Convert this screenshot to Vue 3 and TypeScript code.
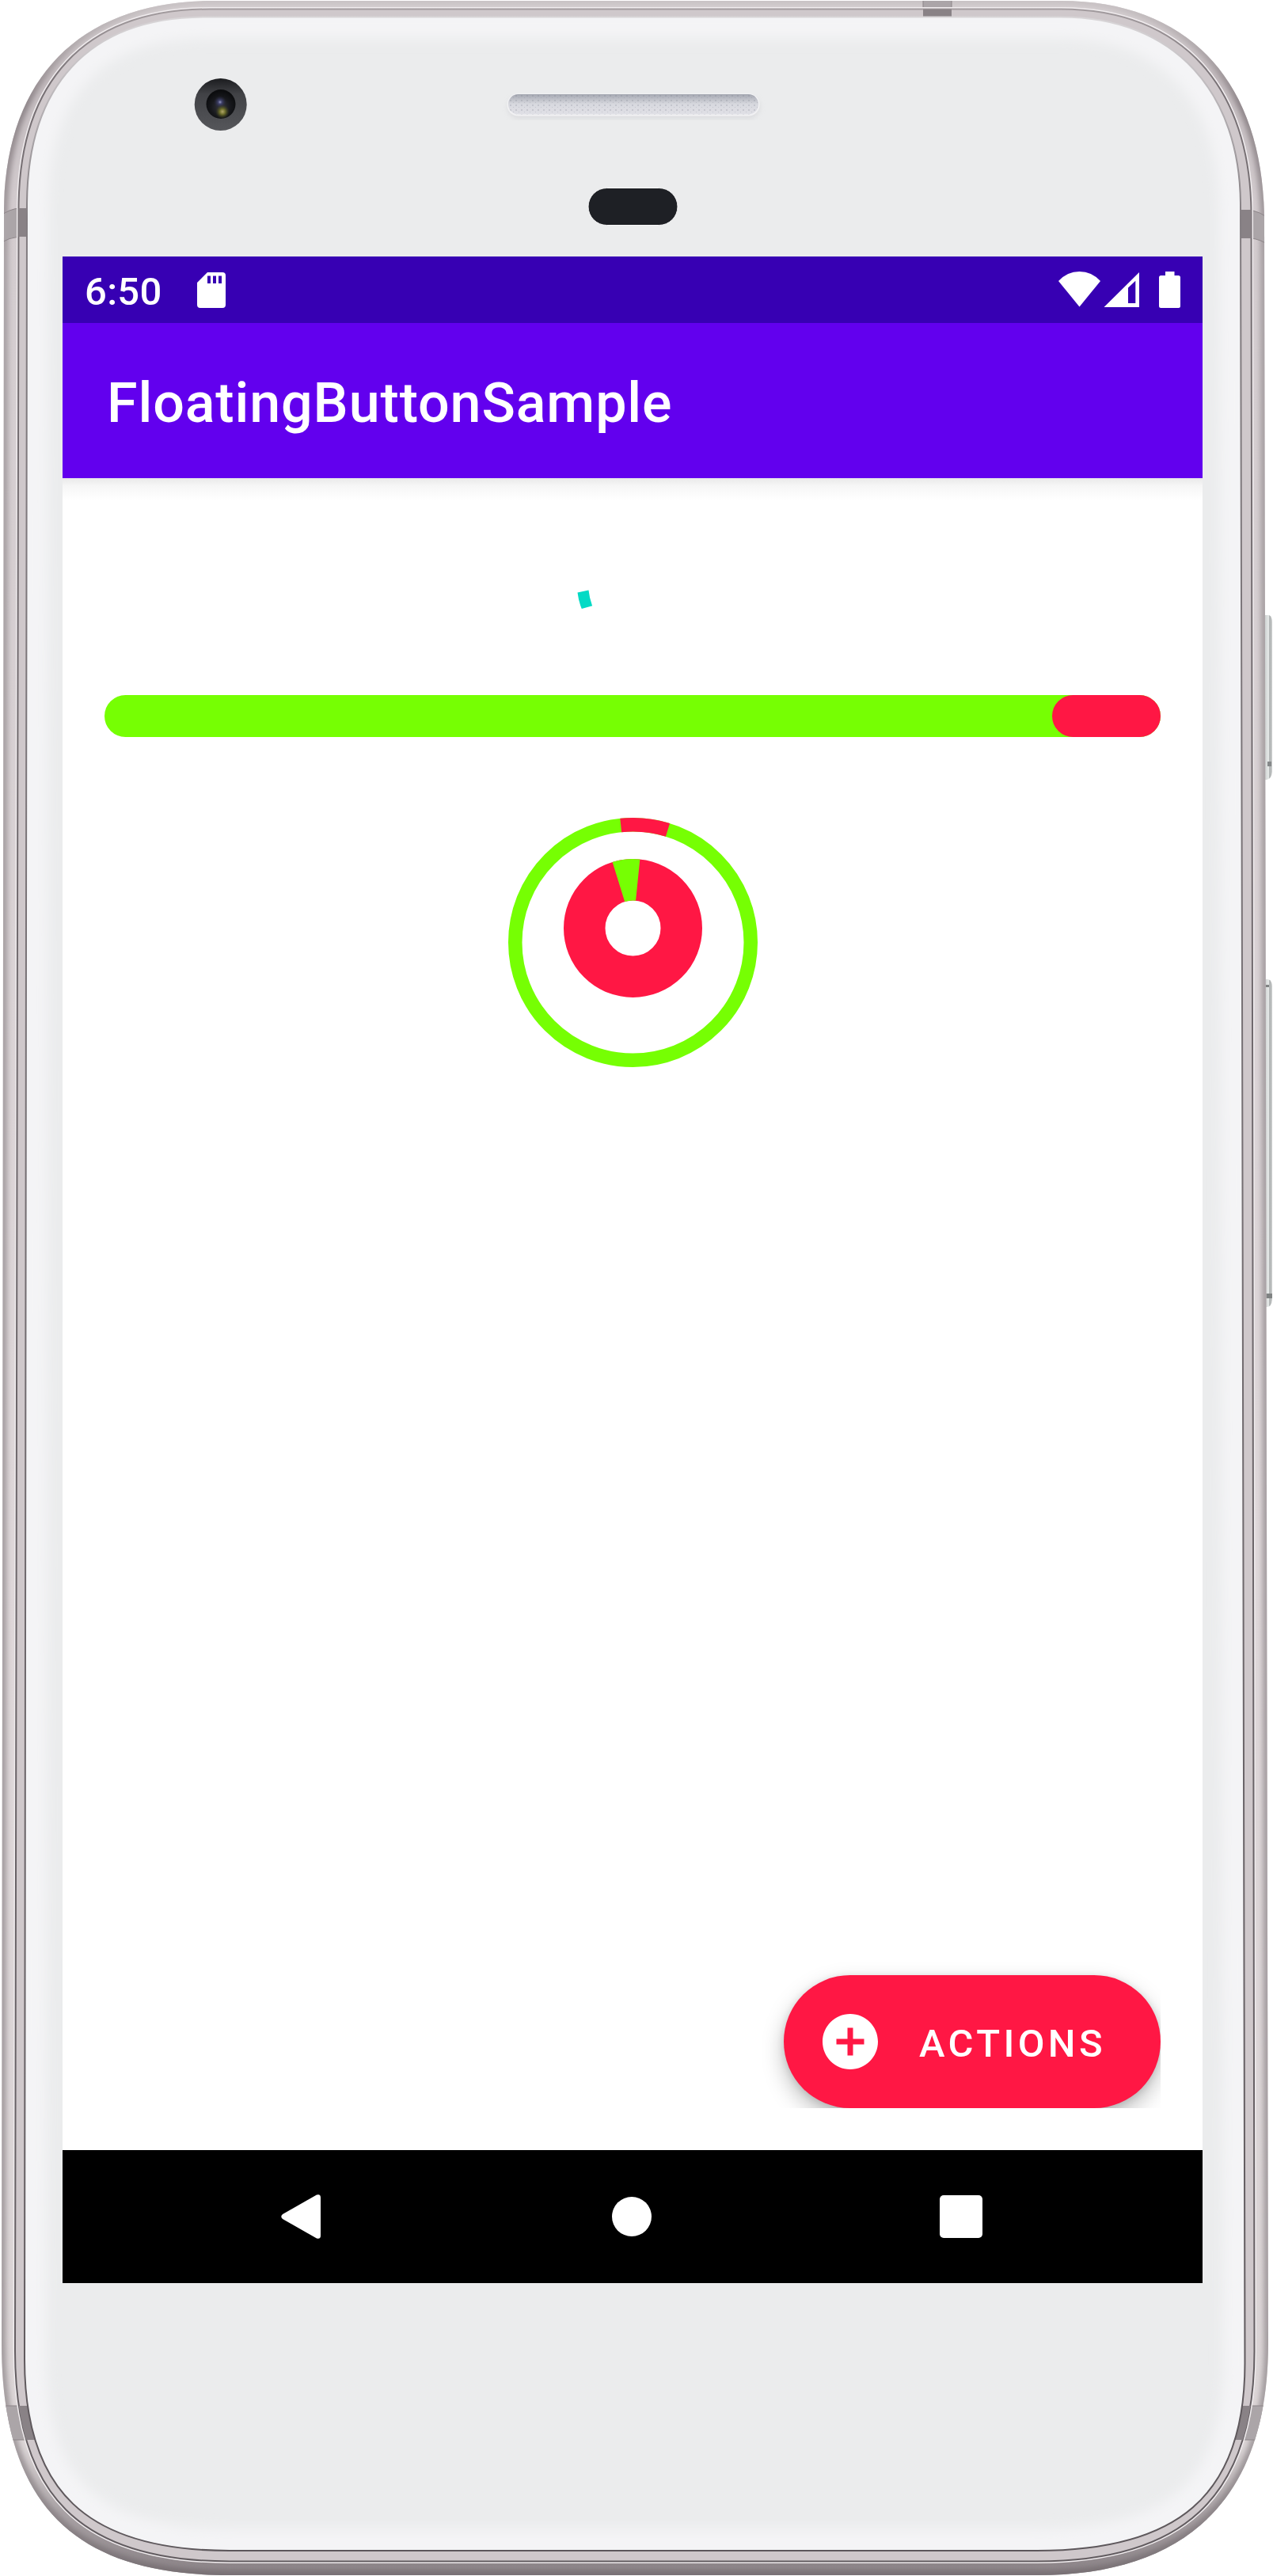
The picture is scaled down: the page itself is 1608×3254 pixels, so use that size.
<script setup lang="ts">
interface Arc {
  cx: number
  cy: number
  r: number
  from: number
  to: number
}

const title = 'FloatingButtonSample'
const clock = '6:50'
const actionLabel = 'ACTIONS'

const arcPath = ({ cx, cy, r, from, to }: Arc): string => {
  const point = (deg: number): string => {
    const a = ((deg - 90) * Math.PI) / 180
    return `${(cx + r * Math.cos(a)).toFixed(2)} ${(cy + r * Math.sin(a)).toFixed(2)}`
  }
  return `M${point(from)}A${r} ${r} 0 0 1 ${point(to)}`
}

const outerArc = arcPath({ cx: 158.5, cy: 158.5, r: 148.75, from: -5.9, to: 17.2 })
const innerArc = arcPath({ cx: 158.5, cy: 140.5, r: 61.25, from: -17.2, to: 5.8 })

const body =
  'M270 1H1340C1503 1 1597 105 1597 280L1602 2960C1602 3160 1495 3253 1310 3253H290C95 3253 2 3165 2 2960L5 270C5 100 100 1 270 1Z'
const bezel =
  'M265 11.5H1340C1495 11.5 1580 112 1580.5 270L1584.5 2970C1584.5 3158 1490 3235.5 1310 3235.5H290C100 3235.5 19 3150 19 2970L23.5 265C23.5 105 105 11.5 265 11.5Z'
const glass =
  'M260 21.5H1340C1485 21.5 1567 118 1567 260L1572.5 2985C1572.5 3155 1485 3222 1310 3222H290C108 3222 31 3145 31 2980L34 260C34 110 110 21.5 260 21.5Z'
const bands =
  'M1166 0H1202V30H1166ZM0 273Q12 264 24 263H40V299H24Q12 300 0 307ZM1560 265H1580Q1592 268 1603 276V310Q1592 302 1580 301H1560ZM0 3039H50V3082H0ZM1556 3039H1608V3082H1556Z'
</script>

<template>
  <div class="phone">
    <svg class="frame" viewBox="0 0 1608 3254" width="1608" height="3254" aria-hidden="true">
      <defs>
        <linearGradient id="metal" x1="0" y1="0" x2="0" y2="1">
          <stop offset="0" stop-color="#d9d3d5" />
          <stop offset="0.03" stop-color="#c2babd" />
          <stop offset="0.08" stop-color="#d3cccf" />
          <stop offset="0.6" stop-color="#dfd8da" />
          <stop offset="0.95" stop-color="#dbd5d6" />
          <stop offset="0.975" stop-color="#aaa3a6" />
          <stop offset="1" stop-color="#898185" />
        </linearGradient>
        <linearGradient id="edge" x1="0" y1="0" x2="0" y2="1">
          <stop offset="0" stop-color="#c9c3c5" />
          <stop offset="0.04" stop-color="#8f868a" />
          <stop offset="0.1" stop-color="#a8a1a4" />
          <stop offset="0.95" stop-color="#a39c9f" />
          <stop offset="1" stop-color="#787074" />
        </linearGradient>
        <linearGradient id="line" x1="0" y1="0" x2="0" y2="1">
          <stop offset="0" stop-color="#a39c9f" />
          <stop offset="0.03" stop-color="#777074" />
          <stop offset="1" stop-color="#625c60" />
        </linearGradient>
        <linearGradient id="glassLine" x1="0" y1="0" x2="0" y2="1">
          <stop offset="0" stop-color="#d8d5d7" />
          <stop offset="0.03" stop-color="#bcb8bb" />
          <stop offset="0.08" stop-color="#827c80" />
          <stop offset="1" stop-color="#5d575b" />
        </linearGradient>
        <linearGradient id="key" x1="0" y1="0" x2="1" y2="0">
          <stop offset="0" stop-color="#a0a3a4" />
          <stop offset="0.3" stop-color="#ced2d1" />
          <stop offset="0.65" stop-color="#e6e9e8" />
          <stop offset="0.75" stop-color="#aaaeae" />
          <stop offset="1" stop-color="#cdcfcf" />
        </linearGradient>
        <linearGradient id="mesh" x1="0" y1="0" x2="0" y2="1">
          <stop offset="0" stop-color="#a4a7b1" />
          <stop offset="0.25" stop-color="#bfc1c9" />
          <stop offset="0.5" stop-color="#d8d9df" />
          <stop offset="1" stop-color="#e0e0e6" />
        </linearGradient>
        <linearGradient id="cam" x1="0" y1="0" x2="0" y2="1">
          <stop offset="0" stop-color="#1b1c1f" />
          <stop offset="0.3" stop-color="#414246" />
          <stop offset="1" stop-color="#55565a" />
        </linearGradient>
        <radialGradient id="lens" cx="0.5" cy="0.6" r="0.55">
          <stop offset="0" stop-color="#35363f" />
          <stop offset="0.6" stop-color="#17181c" />
          <stop offset="1" stop-color="#0b0c0e" />
        </radialGradient>
        <radialGradient id="glint">
          <stop offset="0" stop-color="#b3a86b" />
          <stop offset="0.4" stop-color="#6b6c2a" />
          <stop offset="1" stop-color="#35381a" stop-opacity="0" />
        </radialGradient>
        <radialGradient id="violet">
          <stop offset="0" stop-color="#9296bd" />
          <stop offset="0.3" stop-color="#40426b" />
          <stop offset="1" stop-color="#22233a" stop-opacity="0" />
        </radialGradient>
        <pattern id="weave" width="7" height="6" patternUnits="userSpaceOnUse">
          <path d="M0 0H2V2H0ZM4 3H5V4H4Z" fill="#777b88" opacity="0.22" />
        </pattern>
        <clipPath id="bodyClip"><path :d="body" /></clipPath>
        <clipPath id="bezelClip"><path :d="bezel" /></clipPath>
        <clipPath id="glassClip"><path :d="glass" /></clipPath>
        <filter id="soft4" x="-5%" y="-5%" width="110%" height="110%"><feGaussianBlur stdDeviation="3" /></filter>
        <filter id="soft12" x="-5%" y="-5%" width="110%" height="110%"><feGaussianBlur stdDeviation="8" /></filter>
      </defs>

      <g>
        <path d="M1594 777H1603Q1607 779 1607 786V975Q1606 984 1600 985H1594Z" fill="url(#key)" />
        <path d="M1601 962H1606V968H1601Z" fill="#858889" />
        <path d="M1594 1237H1602Q1607 1239 1607 1246V1642Q1606 1651 1600 1651H1594Z" fill="url(#key)" />
        <path d="M1597 1244H1603V1247H1597ZM1597 1634H1607V1640H1597Z" fill="#7f8282" />
      </g>

      <path :d="body" fill="url(#metal)" />
      <g clip-path="url(#bodyClip)">
        <path :d="body" fill="none" stroke="url(#edge)" stroke-width="11" filter="url(#soft4)" />
        <path :d="bands" fill="#aba5a8" stroke="#8c8588" />
      </g>
      <path :d="bezel" fill="#cfc8cb" stroke="#f0ecee" stroke-width="5" />
      <path :d="bezel" fill="#cfc8cb" stroke="url(#line)" stroke-width="2" />
      <path :d="bands" fill="#898286" clip-path="url(#bezelClip)" />
      <path :d="glass" fill="#ebeced" />
      <path
        :d="glass"
        fill="none"
        stroke="#f4f4f6"
        stroke-width="54"
        filter="url(#soft12)"
        clip-path="url(#glassClip)"
      />
      <path :d="glass" fill="none" stroke="url(#glassLine)" stroke-width="2" />

      <circle cx="278.7" cy="132" r="33" fill="url(#cam)" />
      <circle cx="279" cy="131.500" r="18.500" fill="url(#lens)" />
      <circle cx="278" cy="129" r="8" fill="url(#violet)" />
      <circle cx="281" cy="141" r="9" fill="url(#glint)" />

      <rect x="641" y="121" width="319" height="29" rx="14.500" fill="#d5d6d9" filter="url(#soft4)" opacity="0.7" />
      <rect x="640.500" y="118" width="319" height="28.500" rx="14" fill="#f1f1f3" />
      <rect x="642" y="119" width="316" height="25.500" rx="12.500" fill="url(#mesh)" />
      <rect x="642" y="119" width="316" height="25.500" rx="12.500" fill="url(#weave)" />
      <rect x="743" y="237.500" width="113" height="47" rx="23.500" fill="#1e2025" stroke="#f7f7f8" />
    </svg>

    <main class="screen">
      <header class="status">
        <span class="clock">{{ clock }}</span>
        <svg class="sd" viewBox="0 0 36 45" width="36" height="45">
          <path
            fill="#fff"
            fill-rule="evenodd"
            d="M13 0H32Q36 0 36 4V41Q36 45 32 45H4Q0 45 0 41V13ZM13 4.500V14H17V4.500ZM20 4.500V14H24V4.500ZM27 4.500V14H31V4.500Z"
          />
        </svg>
        <span class="spacer"></span>
        <svg class="signals" viewBox="0 0 154 46" width="154" height="46">
          <g fill="#fff">
            <path d="M0 12Q11 0 26.500 0T53 12L26.500 44.500Z" />
            <path fill-rule="evenodd" d="M102 1V45H57.500ZM97.300 11.700L88 20.500V40H97.300Z" />
            <path d="M135 0H146.500V5H151.500Q154 5 154 7.500V43.500Q154 46 151.500 46H129.500Q127 46 127 43.500V7.500Q127 5 129.500 5H135Z" />
          </g>
        </svg>
      </header>

      <div class="toolbar">
        <h1>{{ title }}</h1>
      </div>

      <section class="content">
        <svg class="spinner" viewBox="0 0 20 25" width="20" height="25">
          <path d="M0.500 3.500L14.500 0.500Q15.500 10 19.200 20.300L5.800 24Q2 15 0.500 3.500Z" fill="#03dac5" />
        </svg>
        <div class="track"><div class="thumb"></div></div>
        <svg class="rings" viewBox="0 0 317 317" width="317" height="317">
          <g fill="none">
            <circle cx="158.500" cy="158.500" r="148.750" stroke="#76ff03" stroke-width="17.500" />
            <path :d="outerArc" stroke="#ff1744" stroke-width="17.500" />
            <circle cx="158.500" cy="140.500" r="61.250" stroke="#ff1744" stroke-width="52.500" />
            <path :d="innerArc" stroke="#76ff03" stroke-width="52.500" />
          </g>
        </svg>
        <div class="fab-area">
          <button class="fab" type="button">
            <svg viewBox="0 0 24 24" width="84" height="84">
              <path
                fill="#fff"
                d="M12 2C6.480 2 2 6.480 2 12s4.480 10 10 10 10-4.480 10-10S17.520 2 12 2zm5 11h-4v4h-2v-4H7v-2h4V7h2v4h4v2z"
              />
            </svg>
            <span>{{ actionLabel }}</span>
          </button>
        </div>
      </section>

      <nav class="navbar">
        <svg viewBox="0 0 50 56" width="50" height="56">
          <path d="M2 25L45 0.600Q50 -1 50 4V52Q50 57 45 55.400L2 31Q-1.500 28 2 25Z" fill="#fff" />
        </svg>
        <svg class="home" viewBox="0 0 50 50" width="50" height="50"><circle cx="25" cy="25" r="25" fill="#fff" /></svg>
        <svg viewBox="0 0 54 54" width="54" height="54"><rect width="54" height="54" rx="5" fill="#fff" /></svg>
      </nav>
    </main>
  </div>
</template>

<style>
body {
  background: #fff;
}
</style>

<style scoped>
.phone {
  position: relative;
  box-sizing: border-box;
  width: 1608px;
  height: 3254px;
  padding: 324px 89px 370px 79px;
  overflow: hidden;
  font-family: Roboto, 'Liberation Sans', sans-serif;
}
.frame {
  position: absolute;
  inset: 0;
}
svg {
  display: block;
  flex: none;
}
.screen {
  position: relative;
  display: flex;
  flex-direction: column;
  width: 1440px;
  height: 2560px;
  background: #fff;
}
.status {
  display: flex;
  box-sizing: border-box;
  height: 84px;
  padding: 19px 28px 0;
  background: #3700b3;
}
.clock {
  width: 142px;
  height: 57px;
  line-height: 51px;
  font-size: 49px;
  font-weight: 500;
  letter-spacing: 0.3px;
  color: #fff;
}
.sd {
  margin-top: 1px;
}
.spacer {
  flex: 1;
}
.toolbar {
  position: relative;
  display: flex;
  align-items: center;
  box-sizing: border-box;
  height: 196px;
  padding: 5px 0 0 56px;
  background: #6200ee;
  color: #fff;
}
.toolbar::after {
  content: '';
  position: absolute;
  top: 100%;
  left: 0;
  right: 0;
  height: 28px;
  background: linear-gradient(#e9e9e9, #f6f6f6 35%, #fff);
}
h1 {
  margin: 0;
  font-size: 70px;
  line-height: 82px;
  font-weight: 500;
  letter-spacing: 0.87px;
}
.content {
  display: flex;
  flex: 1;
  flex-direction: column;
  align-items: center;
  padding: 141px 53px 53px;
}
.spinner {
  margin-left: -121px;
}
.track {
  display: flex;
  justify-content: flex-end;
  width: 1334px;
  height: 53px;
  margin-top: 108px;
  border-radius: 27px;
  background: #76ff03;
}
.thumb {
  width: 137px;
  border-radius: 27px;
  background: #ff1744;
}
.rings {
  margin: 101px 0 0 1px;
}
.fab-area {
  align-self: flex-end;
  margin-top: auto;
  clip-path: inset(-60px 0 0 -60px);
}
.fab {
  display: flex;
  align-items: center;
  box-sizing: border-box;
  width: 476px;
  height: 168px;
  padding: 0 0 0 42px;
  border: 0;
  border-radius: 84px;
  background: #ff1744;
  box-shadow: 0 12px 28px rgba(0, 0, 0, 0.26), 0 2px 10px rgba(0, 0, 0, 0.12);
  font: 500 49px/58px Roboto, 'Liberation Sans', sans-serif;
  letter-spacing: 4.375px;
  color: #fff;
}
.fab span {
  margin: 5px 0 0 45px;
}
.navbar {
  display: flex;
  align-items: center;
  justify-content: space-between;
  box-sizing: border-box;
  height: 168px;
  padding: 0 278px 0 276px;
  background: #000;
}
.home {
  margin-left: 4px;
}
</style>
